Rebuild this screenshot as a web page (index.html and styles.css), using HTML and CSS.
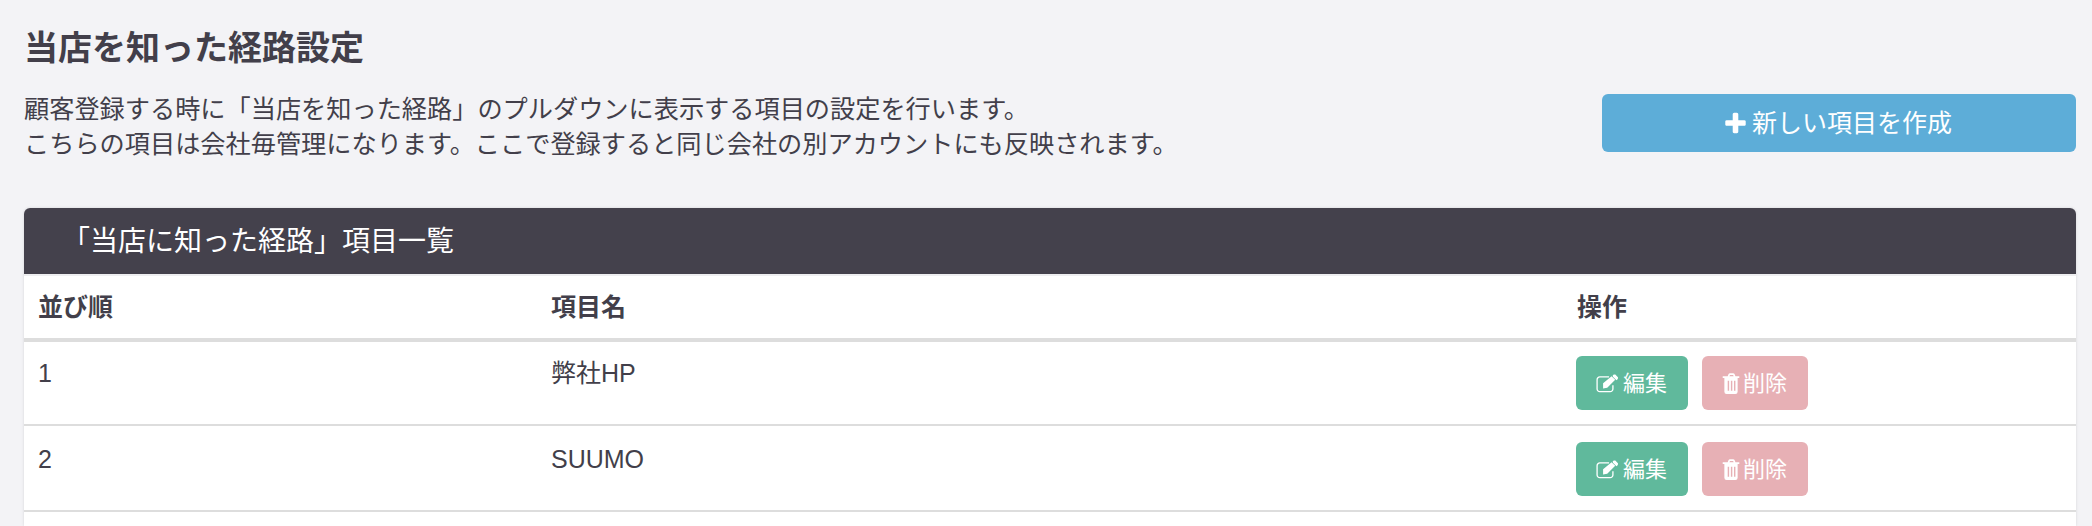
FILE: index.html
```html
<!DOCTYPE html>
<html lang="ja">
<head>
<meta charset="utf-8">
<title>当店を知った経路設定</title>
<link rel="stylesheet" href="styles.css">
</head>
<body>
<main class="page">
  <h1 class="title">当店を知った経路設定</h1>
  <div class="intro">
    <p class="desc">顧客登録する時に「当店を知った経路」のプルダウンに表示する項目の設定を行います。<br>こちらの項目は会社毎管理になります。ここで登録すると同じ会社の別アカウントにも反映されます。</p>
    <a class="btn btn-new"><svg class="ico-plus" viewBox="0 0 1408 1792"><path d="M1408 800v192q0 40-28 68t-68 28h-416v416q0 40-28 68t-68 28h-192q-40 0-68-28t-28-68v-416h-416q-40 0-68-28t-28-68v-192q0-40 28-68t68-28h416v-416q0-40 28-68t68-28h192q40 0 68 28t28 68v416h416q40 0 68 28t28 68z"/></svg>新しい項目を作成</a>
  </div>
  <section class="card">
    <h2 class="card-head">「当店に知った経路」項目一覧</h2>
    <table class="list">
      <colgroup><col class="c1"><col class="c2"><col class="c3"></colgroup>
      <thead><tr><th>並び順</th><th>項目名</th><th>操作</th></tr></thead>
      <tbody>
        <tr><td>1</td><td>弊社HP</td><td><div class="ops">
          <a class="btn btn-s btn-edit"><svg class="ico" viewBox="0 0 22 17"><path class="ln" d="M15.500 10v3.500a2.500 2.500 0 0 1-2.500 2.500H3.500A2.500 2.500 0 0 1 1 13.500V5a2.500 2.500 0 0 1 2.500-2.500H12"/><path d="M6.500 8.300 14.300 1.800l3.300 3.300-7.300 7.400-3.800.6zM15.400.8l1.300-.6 1 .1 2.400 2.400.1 1-.6 1.200-.8.700-3.300-3.300z"/></svg>編集</a>
          <a class="btn btn-s btn-del"><svg class="ico ico-trash" viewBox="0 0 16 19"><path fill-rule="evenodd" d="M5 3l.8-2A1.500 1.500 0 0 1 7 .2h3a1.500 1.500 0 0 1 1.200.8L12 3h3.500v1.500H14V17a2 2 0 0 1-2 2H4a2 2 0 0 1-2-2V4.500H.5V3zM6.600 3h3.800l-.5-1.300H7.100zM5 7v9h1.300V7zm2.900 0v9h1.300V7zm2.800 0v9H12V7z"/></svg>削除</a>
        </div></td></tr>
        <tr><td>2</td><td>SUUMO</td><td><div class="ops">
          <a class="btn btn-s btn-edit"><svg class="ico" viewBox="0 0 22 17"><path class="ln" d="M15.500 10v3.500a2.500 2.500 0 0 1-2.500 2.500H3.500A2.500 2.500 0 0 1 1 13.500V5a2.500 2.500 0 0 1 2.500-2.500H12"/><path d="M6.500 8.300 14.300 1.800l3.300 3.300-7.300 7.400-3.800.6zM15.400.8l1.300-.6 1 .1 2.400 2.400.1 1-.6 1.200-.8.700-3.300-3.300z"/></svg>編集</a>
          <a class="btn btn-s btn-del"><svg class="ico ico-trash" viewBox="0 0 16 19"><path fill-rule="evenodd" d="M5 3l.8-2A1.500 1.500 0 0 1 7 .2h3a1.500 1.500 0 0 1 1.200.8L12 3h3.500v1.500H14V17a2 2 0 0 1-2 2H4a2 2 0 0 1-2-2V4.500H.5V3zM6.600 3h3.800l-.5-1.300H7.100zM5 7v9h1.300V7zm2.900 0v9h1.300V7zm2.800 0v9H12V7z"/></svg>削除</a>
        </div></td></tr>
      </tbody>
    </table>
  </section>
</main>
</body>
</html>
```

FILE: styles.css
```css
* { box-sizing: border-box; }
html, body { margin: 0; height: 526px; overflow: hidden; }
body {
  background: #f3f3f6;
  color: #423f4a;
  font-family: "Liberation Sans", "Noto Sans CJK JP", sans-serif;
  font-size: 25px;
  line-height: 35px;
}
.page { padding: 24px 16px 0 24px; }
.title { margin: 0; font-size: 34px; line-height: 48px; font-weight: 700; }
.intro {
  display: flex;
  justify-content: space-between;
  align-items: flex-start;
  margin-top: 20px;
}
.desc { margin: 0; font-size: 25.2px; }
.btn {
  display: inline-flex;
  align-items: center;
  justify-content: center;
  color: #fff;
  border-radius: 6px;
}
.btn-new {
  width: 474px;
  height: 58px;
  margin-top: 2px;
  background: #5dadd8;
}
.ico-plus { width: 21px; height: 26px; margin-right: 6px; margin-left: -1px; fill: #fff; }
.card {
  margin-top: 46px;
  background: #fff;
  border-radius: 6px 6px 0 0;
  box-shadow: 0 0 3px rgba(0, 0, 0, .12);
  height: 318px;
}
.card-head {
  margin: 0;
  height: 66px;
  padding: 1px 0 0 38px;
  background: #44414c;
  color: #fff;
  font-size: 28px;
  font-weight: 400;
  line-height: 66px;
  border-radius: 6px 6px 0 0;
}
.list { width: 100%; border-collapse: separate; border-spacing: 0; table-layout: fixed; }
.c1 { width: 25%; }
.c2 { width: 50%; }
.c3 { width: 25%; }
.list th, .list td { padding: 14px; text-align: left; vertical-align: top; }
.list th { height: 68px; padding-bottom: 13px; font-weight: 700; border-top: 2px solid #eeeef0; border-bottom: 4px solid #dddddd; }
.list td { height: 86px; padding-top: 16px; border-bottom: 2px solid #dddddd; }
.list tr:first-child td { height: 84px; padding-top: 14px; }
.ops { display: flex; gap: 14px; margin-left: -1px; }
.btn-s { width: 112px; height: 54px; font-size: 22px; }
.btn-edit { background: #60b99c; }
.btn-del { width: 106px; background: #e7b0b5; }
.ico { width: 24px; height: 19px; margin-right: 3px; margin-left: -1px; fill: #fff; }
.ico .ln { fill: none; stroke: #fff; stroke-width: 1.200; }
.ico-trash { width: 18px; height: 21px; margin-right: 3px; }
```
